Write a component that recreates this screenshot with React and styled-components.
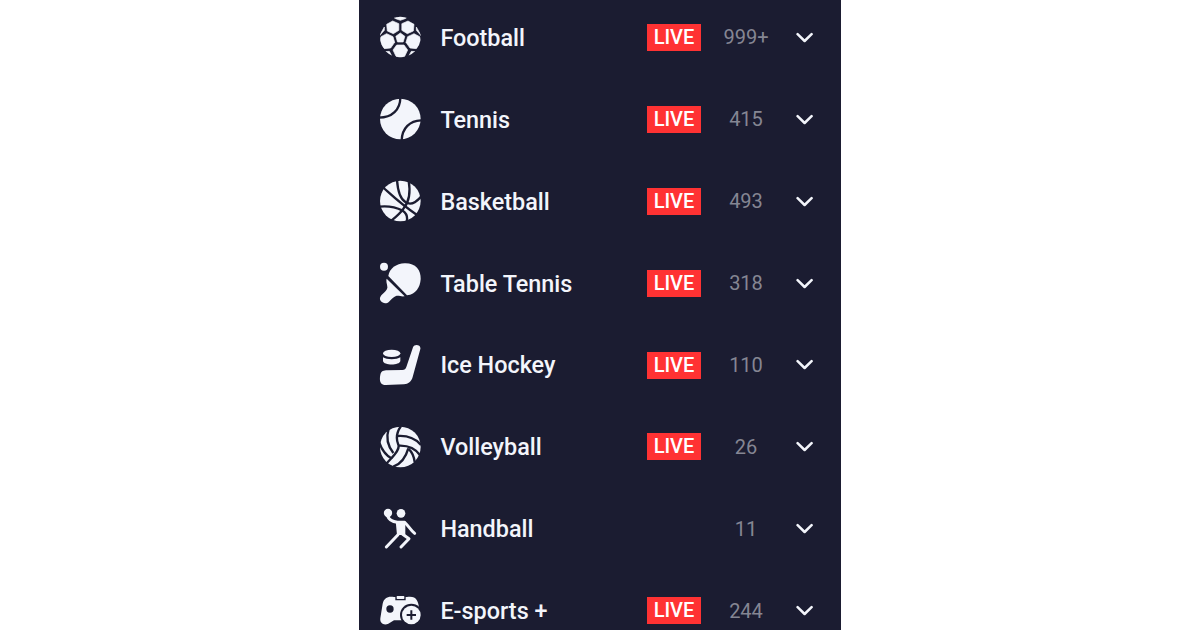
import React from "react";
import styled, { createGlobalStyle } from "styled-components";

const DARK = "#1b1c31";
const LIGHT = "#f3f5fb";

const Cut = ({ d, width = 7 }) => (
  <path d={d} fill="none" stroke={DARK} strokeWidth={width} />
);

const Football = () => (
  <>
    <clipPath id="football">
      <circle cx="91" cy="88" r="61" />
    </clipPath>
    <g clipPath="url(#football)" strokeLinejoin="round" stroke={LIGHT} strokeWidth="2">
      <path d="M91 76 104.500 86 99.500 103H82.500L77.500 86Z" />
      <path d="M68 40 86.500 48V68L70 78 52 70 50 50Z" />
      <path d="M114 40 95.500 48V68L112 78 130 70 132 50Z" />
      <path d="M50 78 69 87 74 104 62 121 43 123 28 104 33 87Z" />
      <path d="M132 78 113 87 108 104 120 121 139 123 154 104 149 87Z" />
      <path d="M80 112H102L113 127 104 146 91 152 78 146 69 127Z" />
      <path d="M72 30 91 24 110 30 105 33 91 38 77 33Z" />
      <path d="M26 88 43 58V68L33 79Z" />
      <path d="M156 88 139 58V68L149 79Z" />
      <path d="M43 132 58 131 65 144 60 148Z" />
      <path d="M139 132 124 131 117 144 122 148Z" />
    </g>
  </>
);

const Tennis = () => (
  <>
    <circle cx="91" cy="88" r="61" />
    <Cut d="M91 24C91 60 66 84 27 84" />
    <Cut d="M95 153C96 116 119 92 156 92" />
  </>
);

const Basketball = () => (
  <>
    <circle cx="91" cy="88" r="61" />
    <Cut d="M38 46C64 69 88 94 140 129" />
    <Cut d="M81 24C83 57 91 82 107 92C122 101 140 91 154 74" />
    <Cut d="M116 27C122 62 117 91 101 110C93 122 80 134 64 147" />
    <Cut d="M29 105C57 102 82 109 98 117C109 124 114 134 110 151" />
  </>
);

const TableTennis = () => (
  <>
    <circle cx="42" cy="39" r="12" />
    <path d="M55 67C58 44 79 30 104 29C136 28 153 48 152 76C151 99 138 122 111 125Z" />
    <path d="M50 75 104 128C94 130 87 125 78 127C71 129 62 139 57 144C50 151 38 149 33 143C27 136 30 129 37 122C44 115 50 111 52 103C53 94 47 85 50 75Z" />
  </>
);

const IceHockey = () => (
  <>
    <ellipse cx="65" cy="53" rx="26" ry="11" />
    <path d="M39 65C49 73 81 73 91 65V76C89 90 41 90 39 76Z" />
    <path d="M129 35C133 23 154 27 151 40L128 124C124 138 115 145 102 146L47 148C29 148 28 133 31 117C34 106 41 104 52 104L97 103C104 103 107 100 109 94Z" />
  </>
);

const Volleyball = () => (
  <>
    <circle cx="91" cy="88" r="61" />
    <Cut d="M93 25C81 42 76 60 85 81C90 94 75 110 64 122L48 139" />
    <Cut d="M56 34C48 58 53 84 70 106" />
    <Cut d="M27 73C35 96 46 112 64 122" />
    <Cut d="M83 55C111 53 136 62 153 82" />
    <Cut d="M86 84C109 83 136 91 151 114" />
    <Cut d="M70 147C94 138 108 117 115 92" />
    <Cut d="M115 93C126 103 132 116 134 133" />
  </>
);

const Handball = () => (
  <>
    <circle cx="54" cy="40" r="12.500" />
    <circle cx="93" cy="41" r="13" />
    <path d="M77 64H106V106H81Z" />
    <g fill="none" stroke={LIGHT} strokeWidth="9" strokeLinecap="round" strokeLinejoin="round">
      <path d="M53 49C57 62 66 66 82 68H104C114 76 121 91 134 101" />
      <path d="M84 105 49 142" />
      <path d="M98 104 117 117 93 142" />
    </g>
  </>
);

const Esports = () => (
  <>
    <path d="M72 46H76V56H107V46H111C139 42 144 56 148 82L152 110C151 123 144 128 134 127L111 116H72L55 126C43 132 29 126 31 110L38 66C42 49 53 43 72 46Z" />
    <rect x="80" y="43" width="23" height="9" rx="2" />
    <circle cx="60" cy="82" r="11" fill={DARK} />
    <circle cx="124" cy="100" r="34" fill={DARK} />
    <circle cx="124" cy="100" r="28" />
    <Cut d="M110 100H138M124 86V114" width={6} />
  </>
);

const sports = [
  { name: "Football", count: "999+", live: true, Icon: Football },
  { name: "Tennis", count: "415", live: true, Icon: Tennis },
  { name: "Basketball", count: "493", live: true, Icon: Basketball },
  { name: "Table Tennis", count: "318", live: true, Icon: TableTennis },
  { name: "Ice Hockey", count: "110", live: true, Icon: IceHockey },
  { name: "Volleyball", count: "26", live: true, Icon: Volleyball },
  { name: "Handball", count: "11", live: false, Icon: Handball },
  { name: "E-sports +", count: "244", live: true, Icon: Esports },
];

function App() {
  return (
    <Page>
      <GlobalStyle />
      <Menu>
        {sports.map(({ name, count, live, Icon }) => (
          <Row key={name}>
            <SportIcon viewBox="27 25 126 126">
              <Icon />
            </SportIcon>
            <Name>{name}</Name>
            {live && <Live>LIVE</Live>}
            <Count>{count}</Count>
            <Chevron viewBox="0 0 18 12">
              <path d="M1.600 2.200 8.600 9 15.600 2.200" />
            </Chevron>
          </Row>
        ))}
      </Menu>
    </Page>
  );
}

const GlobalStyle = createGlobalStyle`
  body {
    margin: 0;
    background: #ffffff;
    font-family: Roboto, sans-serif;
  }
`;

const Page = styled.main`
  display: flex;
  justify-content: center;
  height: 630px;
  overflow: hidden;
`;

const Menu = styled.ul`
  box-sizing: border-box;
  width: 482px;
  height: 660px;
  margin: -3.5px 0 0;
  padding: 0;
  list-style: none;
  background: ${DARK};
`;

const Row = styled.li`
  box-sizing: border-box;
  display: flex;
  align-items: center;
  height: 81.9px;
  padding: 0 27px 0 20px;
`;

const SportIcon = styled.svg`
  flex: none;
  width: 42px;
  height: 42px;
  fill: ${LIGHT};
`;

const Name = styled.span`
  flex: 1;
  margin-left: 19.4px;
  padding-top: 0.8px;
  color: ${LIGHT};
  font-size: 23.4px;
  font-weight: 500;
  line-height: 28px;
  white-space: nowrap;
`;

const Live = styled.span`
  width: 54px;
  height: 27px;
  background: #ff3233;
  color: #ffffff;
  font-size: 20px;
  font-weight: 500;
  line-height: 27px;
  text-align: center;
`;

const Count = styled.span`
  width: 90px;
  color: #858693;
  font-size: 20px;
  line-height: 26px;
  text-align: center;
`;

const Chevron = styled.svg`
  flex: none;
  width: 18px;
  height: 12px;
  margin: 0.8px 0 0 5px;
  fill: none;
  stroke: ${LIGHT};
  stroke-width: 2.5;
  stroke-linecap: round;
  stroke-linejoin: round;
`;

export default App;
